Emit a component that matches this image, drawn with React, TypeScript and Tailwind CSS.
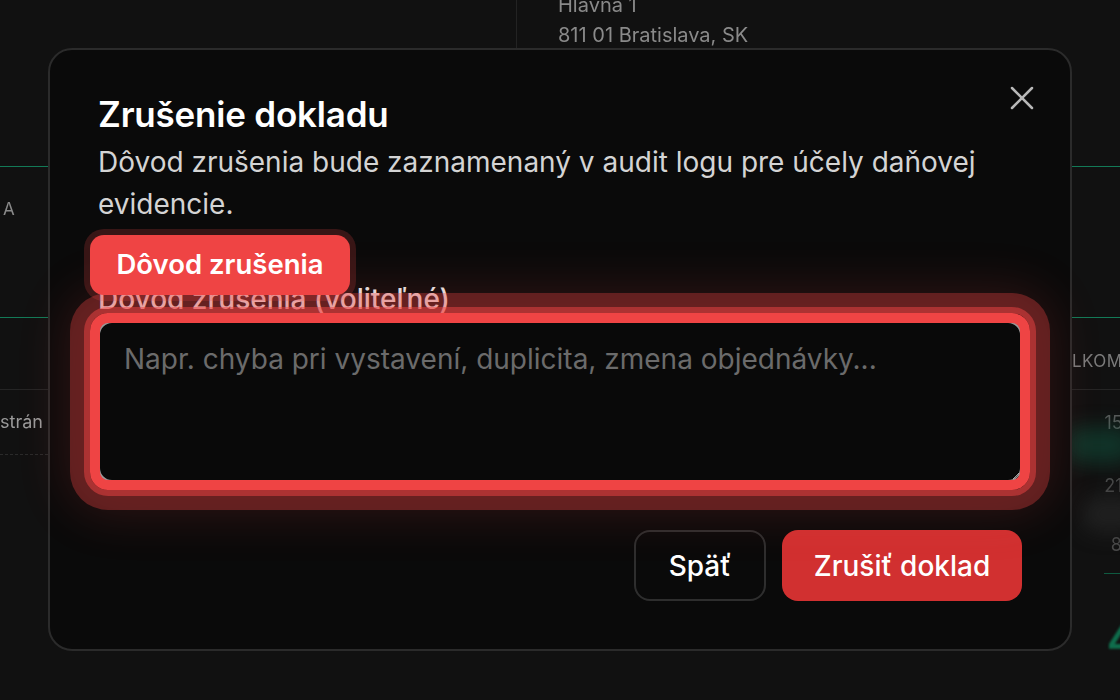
import React from "react";

export default function App() {
  return (
    <div className="relative w-[1120px] h-[700px] overflow-hidden bg-[#111111] font-['Inter','Noto_Sans',sans-serif]">
      {/* background page (dimmed) */}
      <div className="flex flex-col w-[1120px] h-[700px] blur-[0.6px]">
        <div className="h-[166px] flex shrink-0">
          <div className="w-[517px] border-r border-[#232323]" />
          <div className="pl-[41px] -mt-[10px] text-[20px] leading-[30px] text-[#8a8a8a]">
            <div>Hlavna 1</div>
            <div>811 01 Bratislava, SK</div>
          </div>
        </div>
        <div className="h-[151px] shrink-0 border-t border-[#137a57] flex justify-between">
          <div className="pt-[30px] pl-[3px] text-[17px] tracking-wide text-[#8a8a8a]">A</div>
        </div>
        <div className="h-[73px] shrink-0 border-t border-[#137a57] border-b border-b-[#252525] flex justify-end items-center">
          <div className="w-[48px] overflow-hidden pt-[16px] text-[17px] tracking-wide text-[#7a7a7a] whitespace-nowrap">LKOM</div>
        </div>
        <div className="h-[65px] shrink-0 flex justify-between items-center">
          <div className="w-[48px] h-full flex items-center border-b border-dashed border-[#2a2a2a]">
            <span className="text-[18px] text-[#9a9a9a] -mt-[2px]">strán</span>
          </div>
          <div className="text-[18px] text-[#5a5a5a] mr-[-14px]">150</div>
        </div>
        <div className="h-[60px] shrink-0 flex justify-end items-center">
          <div className="w-[70px] h-[36px] rounded-full bg-[#10553f]/50 blur-[10px] mr-[-30px] -mt-[80px]" />
          <div className="text-[18px] text-[#4a4a4a] mr-[-14px]">210</div>
        </div>
        <div className="h-[58px] shrink-0 flex justify-end items-center">
          <div className="w-[60px] h-[36px] rounded-full bg-[#2a2a2a]/60 blur-[10px] mr-[-30px] -mt-[60px]" />
          <div className="text-[18px] text-[#4a4a4a] mr-[-2px]">8</div>
        </div>
        <div className="flex justify-end">
          <div className="w-[16px] border-t border-[#0f5a40]" />
        </div>
        <div className="flex justify-end pt-[36px]">
          <div className="text-[40px] font-bold text-[#0f6d4c] mr-[-14px] blur-[1px]">4</div>
        </div>
      </div>

      {/* dialog */}
      <div className="absolute left-[48px] top-[48px] w-[1024px] rounded-[24px] border-2 border-[#2b2b2b] bg-[#0a0a0a] px-12 pt-[42px] pb-12 text-white">
        <button className="absolute right-[28px] top-[28px] w-[40px] h-[40px] flex items-center justify-center text-[#b8b8b8]">
          <svg width="40" height="40" viewBox="0 0 24 24" fill="none" stroke="currentColor" strokeWidth="1.5" strokeLinecap="round" strokeLinejoin="round">
            <path d="M18 6 6 18" />
            <path d="m6 6 12 12" />
          </svg>
        </button>
        <h2 className="text-[35px] leading-[44px] font-semibold tracking-[-0.2px] text-white">Zrušenie dokladu</h2>
        <p className="mt-[5px] text-[28px] leading-[42px] text-[#d4d4d4]">
          Dôvod zrušenia bude zaznamenaný v audit logu pre účely daňovej evidencie.
        </p>

        <div className="relative mt-[54px]">
          <label className="block text-[28px] leading-[40px] font-medium text-[#e5e5e5]">Dôvod zrušenia (voliteľné)</label>
          <textarea
            className="block mt-[2px] w-full h-[161px] rounded-[14px] border-2 border-[#9a9a9a] bg-[#090909] px-6 py-4 text-[28px] leading-[40px] text-white placeholder:text-[#6b6b6b] outline-none [color-scheme:dark]"
            placeholder="Napr. chyba pri vystavení, duplicita, zmena objednávky..."
          />
          {/* highlight overlay */}
          <div className="pointer-events-none absolute left-[-8px] right-[-8px] top-[34px] h-[177px] rounded-[18px] border-[10px] border-[#ef4444] shadow-[0_0_0_6px_rgba(239,68,68,0.5),0_0_0_20px_rgba(239,68,68,0.33),0_0_50px_24px_rgba(239,68,68,0.16)]" />
          {/* badge */}
          <div className="pointer-events-none absolute left-[-8px] top-[-44px] w-[260px] h-[60px] rounded-[14px] bg-[#ef4444] shadow-[0_0_0_6px_rgba(239,68,68,0.2)] flex items-center justify-center text-[27.5px] font-semibold text-white">
            Dôvod zrušenia
          </div>
        </div>

        <div className="mt-12 flex justify-end gap-4">
          <button className="w-[132px] h-[71px] rounded-[16px] border-2 border-[#2e2e2e] bg-[#0a0a0a] text-[28px] font-medium text-white">Späť</button>
          <button className="w-[240px] h-[71px] rounded-[16px] bg-[#d13030] text-[28px] font-medium text-white">Zrušiť doklad</button>
        </div>
      </div>
    </div>
  );
}
